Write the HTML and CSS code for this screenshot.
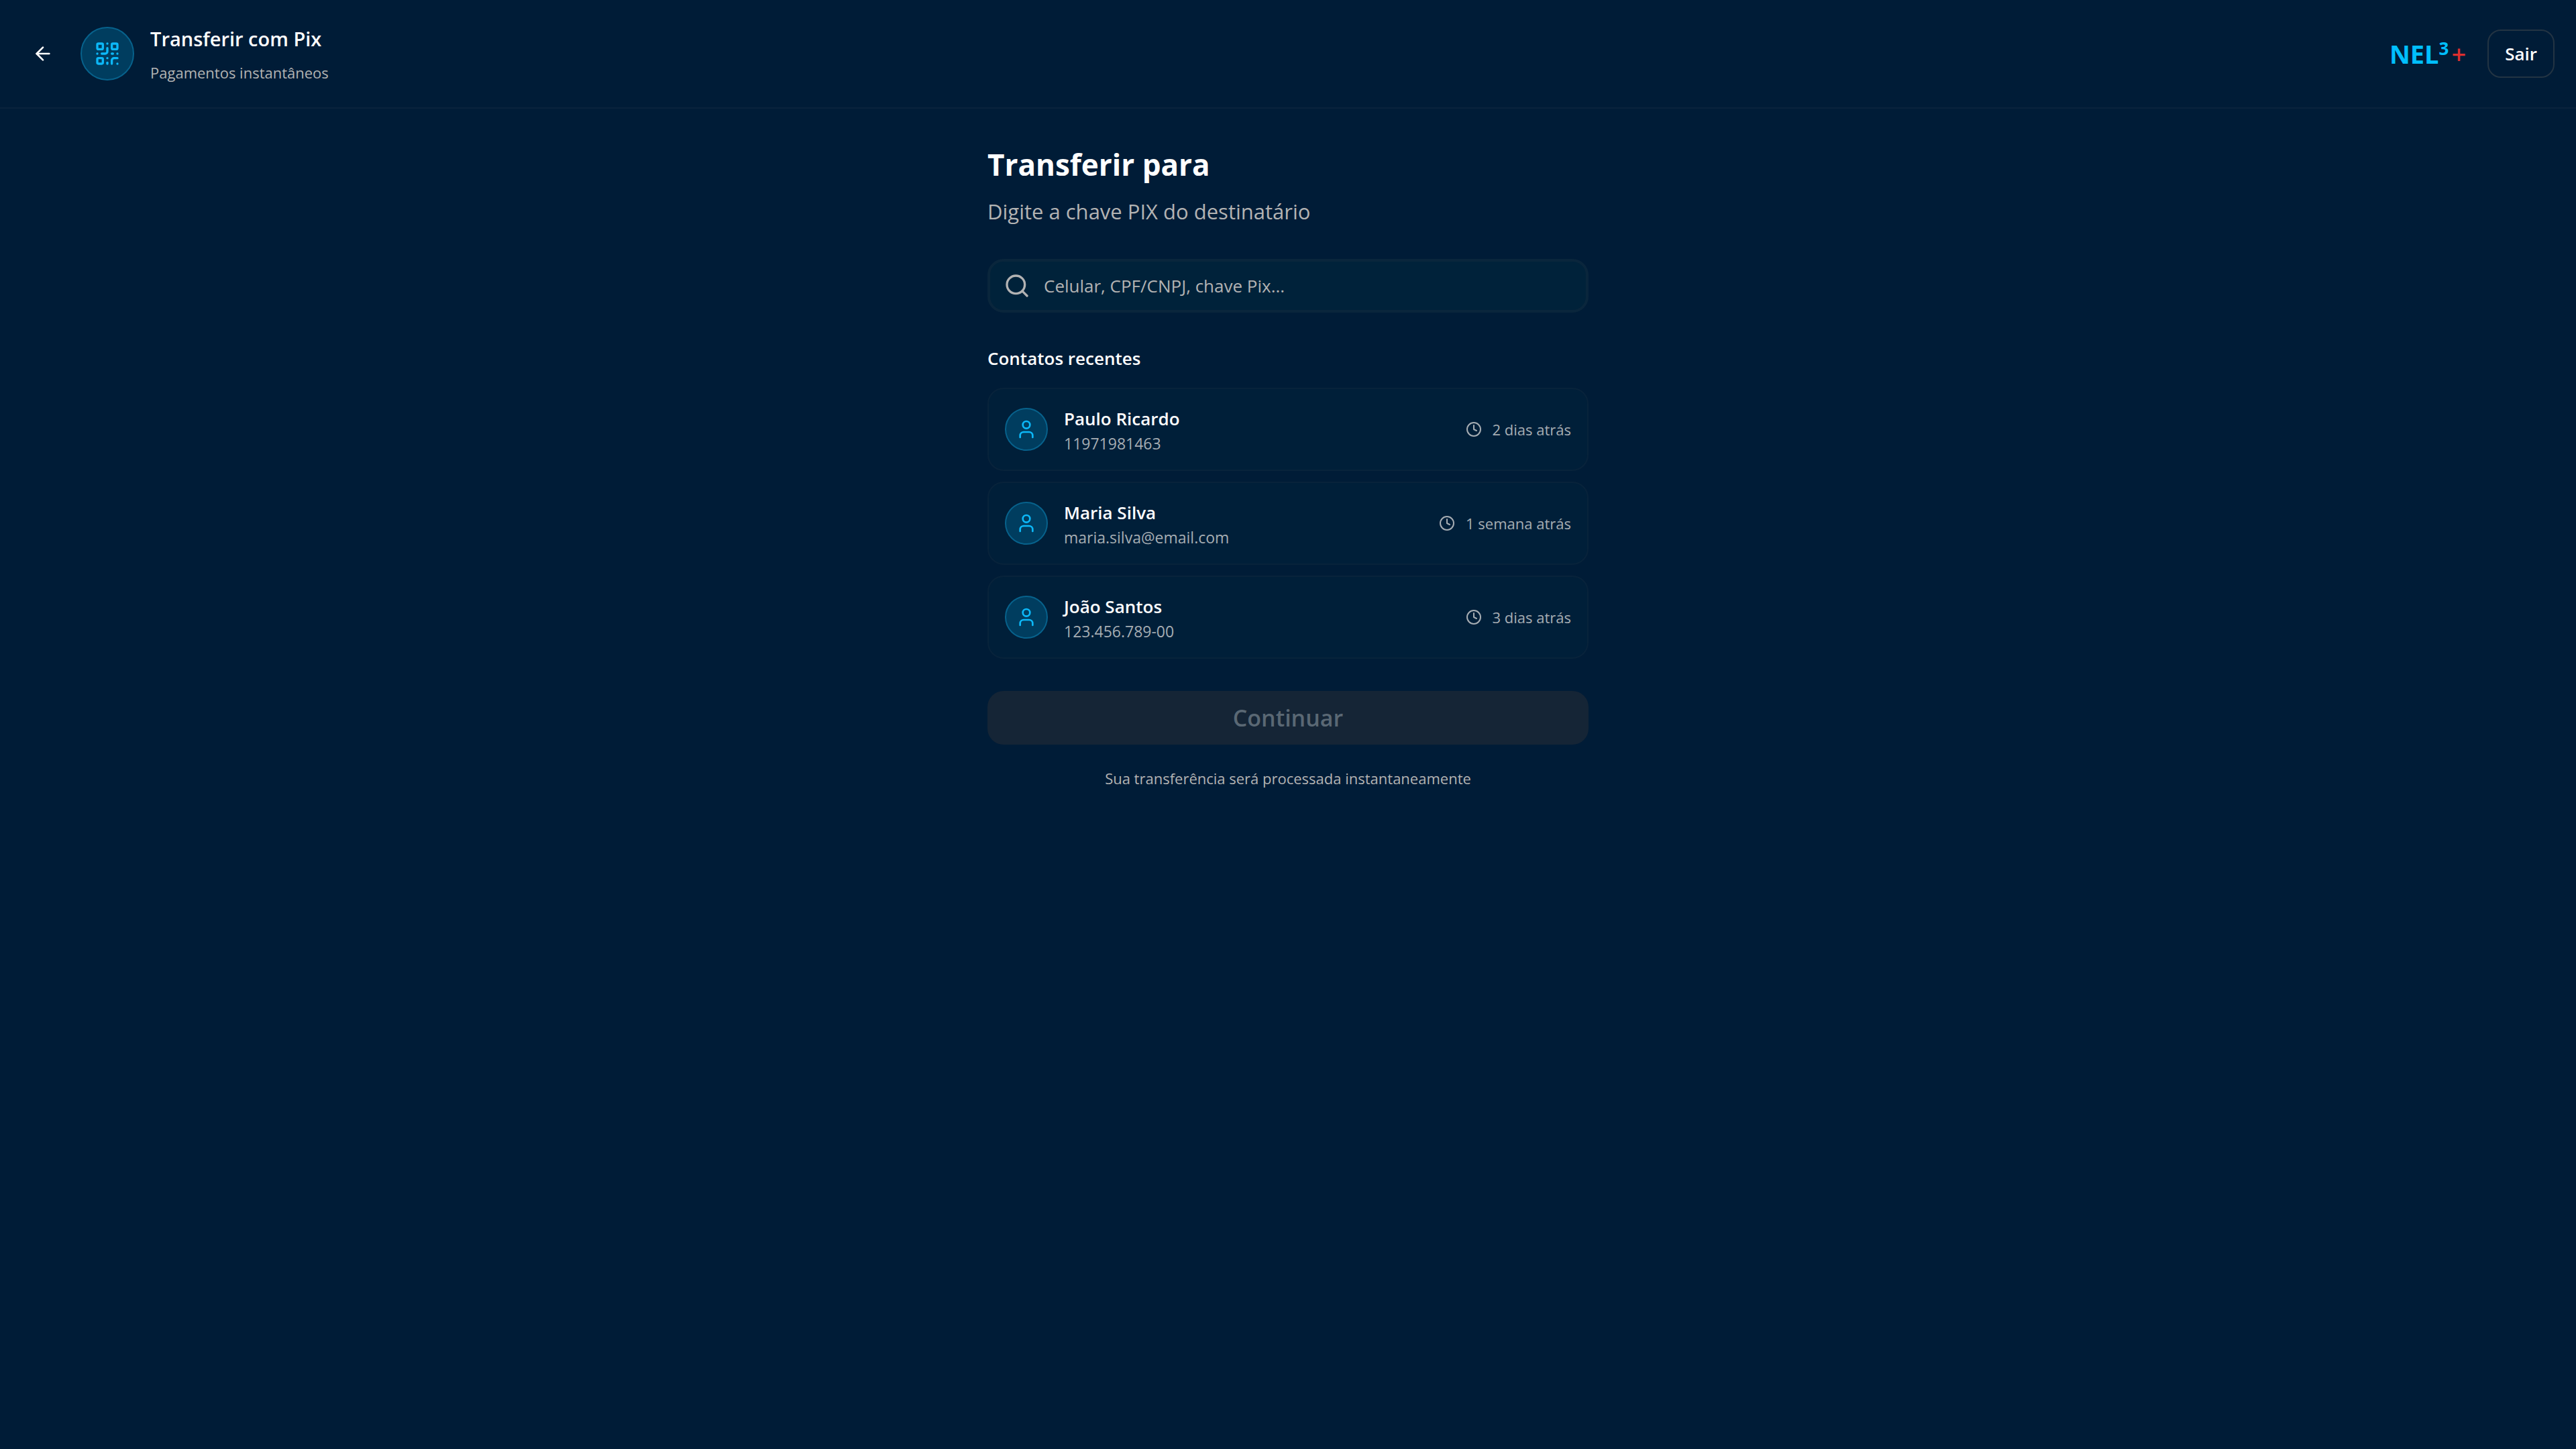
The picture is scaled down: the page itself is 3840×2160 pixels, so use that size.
FILE: index.html
```html
<!DOCTYPE html>
<html lang="pt-BR">
<head>
<meta charset="utf-8">
<meta name="viewport" content="width=device-width, initial-scale=1">
<title>Transferir com Pix</title>
<link rel="stylesheet" href="styles.css">
</head>
<body>
<svg class="sprite" aria-hidden="true">
  <symbol id="icon-user" viewBox="0 0 24 24">
    <path d="M19 21v-2a4 4 0 0 0-4-4H9a4 4 0 0 0-4 4v2"/>
    <circle cx="12" cy="7" r="4"/>
  </symbol>
  <symbol id="icon-clock" viewBox="0 0 24 24">
    <circle cx="12" cy="12" r="10"/>
    <path d="M12 6v6l4 2"/>
  </symbol>
</svg>

<header class="topbar">
  <div class="topbar-start">
    <button class="back" type="button" aria-label="Voltar">
      <svg class="icon icon-md" viewBox="0 0 24 24"><path d="m12 19-7-7 7-7"/><path d="M19 12H5"/></svg>
    </button>
    <span class="badge badge-lg">
      <svg class="icon icon-lg" viewBox="0 0 24 24">
        <rect width="5" height="5" x="3" y="3" rx="1"/>
        <rect width="5" height="5" x="16" y="3" rx="1"/>
        <rect width="5" height="5" x="3" y="16" rx="1"/>
        <path d="M21 16h-3a2 2 0 0 0-2 2v3"/>
        <path d="M21 21v.01"/>
        <path d="M12 7v3a2 2 0 0 1-2 2H7"/>
        <path d="M3 12h.01"/>
        <path d="M12 3h.01"/>
        <path d="M12 16v.01"/>
        <path d="M16 12h1"/>
        <path d="M21 12v.01"/>
        <path d="M12 21v-1"/>
      </svg>
    </span>
    <div>
      <p class="topbar-title">Transferir com Pix</p>
      <p class="topbar-subtitle">Pagamentos instantâneos</p>
    </div>
  </div>
  <div class="topbar-end">
    <div class="logo"><span>NEL</span><sup class="logo-sup">3</sup><span class="logo-plus">+</span></div>
    <button class="logout" type="button">Sair</button>
  </div>
</header>

<main class="content">
  <h1 class="heading">Transferir para</h1>
  <label class="lead" for="pix-key">Digite a chave PIX do destinatário</label>
  <div class="search">
    <svg class="icon icon-lg" viewBox="0 0 24 24"><circle cx="11" cy="11" r="8"/><path d="m21 21-4.3-4.3"/></svg>
    <input class="search-input" id="pix-key" type="text" placeholder="Celular, CPF/CNPJ, chave Pix...">
  </div>

  <h2 class="section-title">Contatos recentes</h2>
  <div class="contacts">
    <button class="contact" type="button">
      <span class="badge"><svg class="icon icon-md"><use href="#icon-user"/></svg></span>
      <span class="contact-info"><span class="contact-name">Paulo Ricardo</span><span class="contact-key">11971981463</span></span>
      <span class="contact-time"><svg class="icon icon-sm"><use href="#icon-clock"/></svg>2 dias atrás</span>
    </button>
    <button class="contact" type="button">
      <span class="badge"><svg class="icon icon-md"><use href="#icon-user"/></svg></span>
      <span class="contact-info"><span class="contact-name">Maria Silva</span><span class="contact-key">maria.silva@email.com</span></span>
      <span class="contact-time"><svg class="icon icon-sm"><use href="#icon-clock"/></svg>1 semana atrás</span>
    </button>
    <button class="contact" type="button">
      <span class="badge"><svg class="icon icon-md"><use href="#icon-user"/></svg></span>
      <span class="contact-info"><span class="contact-name">João Santos</span><span class="contact-key">123.456.789-00</span></span>
      <span class="contact-time"><svg class="icon icon-sm"><use href="#icon-clock"/></svg>3 dias atrás</span>
    </button>
  </div>

  <button class="continue" type="button" disabled>Continuar</button>
  <p class="note">Sua transferência será processada instantaneamente</p>
</main>
</body>
</html>
```
FILE: styles.css
```css
*,
*::before,
*::after {
  box-sizing: border-box;
}

:root {
  --bg: #001c37;
  --text: #ffffff;
  --muted: #b3b3b3;
  --primary: #00bfff;
}

body {
  margin: 0;
  min-height: 100vh;
  background: var(--bg);
  color: var(--text);
  font-family: "Segoe UI", "Open Sans", sans-serif;
}

h1, h2, p {
  margin: 0;
}

button, input {
  font: inherit;
  color: inherit;
}

.sprite {
  display: none;
}

.icon {
  flex: none;
  fill: none;
  stroke: currentColor;
  stroke-width: 2;
  stroke-linecap: round;
  stroke-linejoin: round;
}

.icon-sm { width: 24px; height: 24px; }
.icon-md { width: 32px; height: 32px; }
.icon-lg { width: 40px; height: 40px; }

.badge {
  display: flex;
  flex: none;
  align-items: center;
  justify-content: center;
  width: 64px;
  height: 64px;
  border: 2px solid #07628c;
  border-radius: 50%;
  background: #003d5f;
  color: #0cb8f8;
}

.badge-lg {
  width: 80px;
  height: 80px;
}

/* Top bar */
.topbar {
  display: flex;
  align-items: center;
  justify-content: space-between;
  padding: 30px 32px;
  border-bottom: 2px solid #0a233c;
}

.topbar-start {
  display: flex;
  align-items: center;
  gap: 24px;
}

.back {
  display: flex;
  padding: 16px;
  border: 0;
  background: none;
}

.topbar-title {
  font-size: 29px;
  font-weight: 600;
  line-height: 56px;
}

.topbar-subtitle {
  color: var(--muted);
  font-size: 22px;
  line-height: 44px;
}

.topbar-end {
  display: flex;
  align-items: center;
  gap: 32px;
}

.logo {
  display: flex;
  align-items: baseline;
  color: var(--primary);
  font-size: 38px;
  font-weight: 700;
  line-height: 56px;
}

.logo-sup {
  align-self: flex-start;
  font-size: 26px;
  line-height: 40px;
}

.logo-plus {
  margin-left: 4px;
  color: #dc2f2f;
  font-weight: 600;
}

.logout {
  height: 72px;
  padding: 0 24px;
  border: 2px solid #233443;
  border-radius: 20px;
  background: none;
  font-size: 26px;
  font-weight: 600;
}

/* Transfer form */
.content {
  display: flex;
  flex-direction: column;
  width: 100%;
  max-width: 960px;
  margin: 0 auto;
  padding: 48px 32px;
}

.heading {
  font-size: 44px;
  font-weight: 700;
  line-height: 70px;
}

.lead {
  margin: 8px 0 44px;
  color: var(--muted);
  font-size: 31px;
  line-height: 54px;
}

.search {
  display: flex;
  align-items: center;
  gap: 20px;
  height: 80px;
  padding: 0 20px;
  border: 4px solid #0a263c;
  border-radius: 24px;
  background: #00223a;
  color: var(--muted);
}

.search-input {
  flex: 1;
  min-width: 0;
  padding: 0;
  border: 0;
  outline: 0;
  background: none;
  font-size: 26px;
}

.search-input::placeholder {
  color: var(--muted);
  opacity: 1;
}

.section-title {
  margin: 48px 0 24px;
  font-size: 26px;
  font-weight: 600;
  line-height: 40px;
}

.contacts {
  display: flex;
  flex-direction: column;
  gap: 16px;
}

.contact {
  display: flex;
  align-items: center;
  gap: 24px;
  min-height: 124px;
  padding: 16px 24px;
  border: 2px solid #08233b;
  border-radius: 24px;
  background: #001f39;
  text-align: left;
}

.contact-info {
  display: flex;
  flex: 1;
  flex-direction: column;
}

.contact-name {
  font-size: 26px;
  font-weight: 600;
  line-height: 42px;
}

.contact-key {
  color: #a6adb3;
  font-size: 23px;
  line-height: 32px;
}

.contact-time {
  display: flex;
  align-items: center;
  gap: 16px;
  color: #a6adb3;
  font-size: 22px;
}

.continue {
  height: 80px;
  margin: 48px 0 32px;
  border: 0;
  border-radius: 24px;
  background: #152536;
  color: #5a6874;
  font-size: 34px;
  font-weight: 600;
}

.note {
  color: var(--muted);
  font-size: 22px;
  line-height: 36px;
  text-align: center;
}
```
